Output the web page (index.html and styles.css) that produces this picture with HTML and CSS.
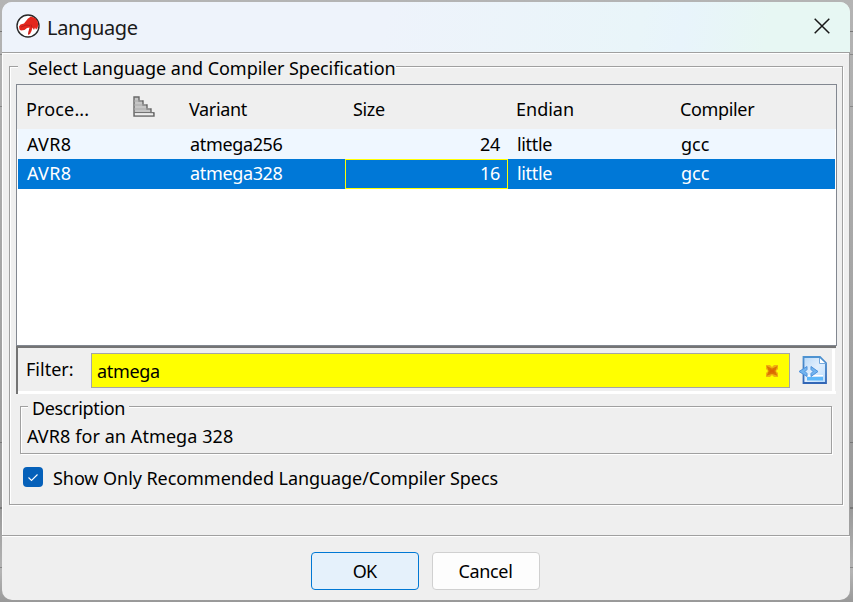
FILE: index.html
```html
<!DOCTYPE html>
<html lang="en">
<head>
<meta charset="utf-8">
<title>Language</title>
<link rel="stylesheet" href="styles.css">
</head>
<body>
<main class="dialog">
  <header class="titlebar">
    <svg class="logo" viewBox="0 0 24 24"><circle cx="12" cy="12" r="11" fill="#fff" stroke="#292929" stroke-width="1.4"/><path d="M3 12.500 4.500 10.500 8 9.500 10 7 12 4.500 15 2.500 19 4 21.500 7 22.300 11 21.500 14 20 15.500 19 13.500 18 16 16.500 13.500 15.500 17 14 20 12 21 12.500 17.500 13.500 13.500 11 14 8.500 16 5 16.500 3.500 15.500Z" fill="#e4261c"/><path d="m5 13 5-2 4 .5M15 10.500l1 3M14 15l-1.500 5" fill="none" stroke="#a81a18" stroke-width=".7"/></svg>
    <h1 class="title">Language</h1>
    <svg class="close" viewBox="0 0 16 16"><path d="m.7.7 14.6 14.6M15.3.7.7 15.3" fill="none" stroke="#181818" stroke-width="1.5"/></svg>
  </header>
  <section class="content">
    <div class="group">
      <div class="legend">Select Language and Compiler Specification</div>
      <div class="table">
        <div class="row head">
          <div class="cell first"><span class="proc">Proce...</span>
            <svg class="sort" viewBox="0 0 22 21"><path d="M1 1h5v4h4v4h4v4h4v4h3v3H1Z" fill="#c6c6c6" stroke="#686868" stroke-width="1.4"/><path d="M1 5h8M1 9h12M1 13h16" stroke="#aaa"/><path d="M1 16.500h20" stroke="#747474"/><path d="M2 18.300h18" stroke="#eee" stroke-width="2"/></svg>
          </div>
          <div class="cell">Variant</div><div class="cell">Size</div><div class="cell endian">Endian</div><div class="cell">Compiler</div>
        </div>
        <div class="row alt"><div class="cell avr">AVR8</div><div class="cell">atmega256</div><div class="cell num">24</div><div class="cell">little</div><div class="cell gcc">gcc</div></div>
        <div class="row selected"><div class="cell avr">AVR8</div><div class="cell">atmega328</div><div class="cell num focus">16</div><div class="cell">little</div><div class="cell gcc">gcc</div></div>
      </div>
      <div class="filter">
        <span class="filter-label">Filter:</span>
        <div class="field"><span>atmega</span>
          <svg class="clear" viewBox="0 0 14 14"><path d="M1 1h4l2 2 2-2h4v4l-2 2 2 2v4H9l-2-2-2 2H1V9l2-2-2-2Z" fill="#f0b010"/><path d="M3 3.500 7 5.500l4-2L9.500 7l1.500 3.500L7 9l-4 1.500L4.500 7Z" fill="#dc6500" stroke="#dc7600" stroke-width="1.500"/></svg>
        </div>
        <div class="options">
          <svg viewBox="0 0 30 30"><defs><linearGradient id="paper" x2="1" y2="1"><stop stop-color="#b9d9f8"/><stop offset=".5" stop-color="#e2effd"/><stop offset="1" stop-color="#b5dcff"/></linearGradient><linearGradient id="edge" x2="0" y2="1"><stop stop-color="#4e93d1"/><stop offset="1" stop-color="#3266b5"/></linearGradient></defs><path d="M5.500 2H22l6 6v20H5.500Z" fill="url(#paper)" stroke="url(#edge)" stroke-width="1.800"/><path d="M21.500 3v5.500h6" fill="#fff" stroke="#73a9df"/><path d="M9 22h16v3.500H9z" fill="#5eb8fa"/><path d="M10 20.500h15" stroke="#fff"/><path d="M9 11.500 1 16.500l8 5v-3l-2-2 2-2ZM13 11.500l7 5-7 5v-3l2-2-2-2Z" fill="#72b4ef" stroke="#4c91dc" stroke-width="1"/></svg>
        </div>
      </div>
      <div class="description">
        <div class="legend small">Description</div>
        <div class="desc-text">AVR8 for an Atmega 328</div>
      </div>
      <label class="check"><span class="box"><svg viewBox="0 0 20 20"><path d="m5.500 10.500 3 3 6-6" fill="none" stroke="#fff" stroke-width="1.100"/></svg></span><span class="check-text">Show Only Recommended Language/Compiler Specs</span></label>
    </div>
  </section>
  <footer class="buttons"><button class="btn ok">OK</button><button class="btn">Cancel</button></footer>
</main>
</body>
</html>
```
FILE: styles.css
```css
* { box-sizing: border-box; }
body {
  margin: 0;
  width: 853px;
  height: 602px;
  padding: 2px 3px 2px 2px;
  overflow: hidden;
  background:
    linear-gradient(#777, #777) 0 31px / 100% 1px no-repeat,
    linear-gradient(#888, #888) 0 54px / 100% 1px no-repeat,
    linear-gradient(#888, #888) 0 106px / 100% 1px no-repeat,
    linear-gradient(#777, #777) 0 442px / 100% 1px no-repeat,
    linear-gradient(#777, #777) 0 507px / 100% 2px no-repeat,
    linear-gradient(#888, #888) 0 567px / 100% 1px no-repeat,
    linear-gradient(#b4b4b4, #a5a5a5 50%, #999 84%, #b4b4b4 95%, #999);
  font: 18px/22px "Noto Sans", sans-serif;
  letter-spacing: -0.35px;
  color: #000;
}
svg { display: block; }
.dialog {
  height: 598px;
  display: flex;
  flex-direction: column;
  border-radius: 10px;
  overflow: hidden;
  background: #efefef;
}
.titlebar {
  height: 50px;
  flex: none;
  display: flex;
  align-items: center;
  padding: 0 20px 0 14px;
  background: linear-gradient(100deg, #eef3fb 0%, #eef3fb 45%, #e9f5f9 75%, #e8f4fb 80%, #e7f7f3 90%);
}
.logo { width: 24px; height: 24px; margin-top: -2px; }
.title { flex: 1; margin: 1px 0 0 7px; font-size: 20px; line-height: 26px; font-weight: 400; color: #1a1a1a; }
.close { width: 16px; height: 16px; margin-top: -2px; }
.content {
  height: 484px;
  flex: none;
  padding: 13px 6px 0 7px;
  border: solid #a0a0a0;
  border-width: 1px 1px 1px 0;
  box-shadow: inset 1px 1px #fff, 0 1px #fff;
}
.group {
  height: 439px;
  border: 1px solid #a0a0a0;
  box-shadow: inset 1px 1px #fff, 1px 1px #fff;
  padding: 0 5px 0 6px;
}
.legend {
  width: 378px;
  height: 22px;
  margin: -10px 0 0 2px;
  padding-left: 10px;
  background: #efefef;
  white-space: nowrap;
  letter-spacing: -0.04px;
}
.table {
  height: 262px;
  margin-top: 5px;
  border: 1px solid #828790;
  background: #fff;
  padding-right: 1px;
}
.row {
  display: grid;
  grid-template-columns: 163px 164px 163px 164px 1fr;
  height: 30px;
  margin-left: 1px;
  padding-bottom: 1px;
}
.head { height: 44px; margin: 0 -1px 0 0; padding-left: 1px; background: #efefef; }
.alt { background: #eff7ff; }
.selected { background: #0078d7; color: #fff; padding-bottom: 0; }
.cell { display: flex; align-items: center; padding: 0 8px 0 9px; }
.selected .cell { padding-bottom: 2px; }
.head .cell { padding: 4px 8px 0 8px; }
.head .endian { letter-spacing: 0; }
.proc { letter-spacing: 0.15px; }
.avr { letter-spacing: 0.3px; }
.gcc { letter-spacing: 0; }
.first { justify-content: space-between; }
.sort { width: 22px; height: 21px; margin: -5px 18px 0 0; }
.num { justify-content: flex-end; }
.selected .focus { border: 1px solid #ff0; padding: 0 7px 2px 0; }
.filter {
  height: 48px;
  margin-right: 1px;
  display: flex;
  align-items: center;
  border: solid #747474;
  border-width: 2px 0 0 2px;
  box-shadow: inset 0 -3px #fff;
  padding-left: 8px;
}
.filter-label { width: 65px; margin-top: -5px; letter-spacing: 0; }
.field {
  width: 699px;
  height: 35px;
  display: flex;
  align-items: center;
  justify-content: space-between;
  margin-top: -1px;
  padding: 1px 10px 0 5px;
  border: 1px solid #a5a5a5;
  background: #ff0;
}
.clear { width: 14px; height: 14px; }
.options { width: 45px; height: 43px; margin: -2px 0 0 0; padding: 6px 0 0 8px; border-right: 3px solid #fff; }
.options svg { width: 30px; height: 30px; }
.description {
  height: 48px;
  margin: 12px 5px 0 4px;
  border: 1px solid #a0a0a0;
  box-shadow: inset 1px 1px #fff, 1px 1px #fff;
}
.small { width: 101px; height: 20px; margin: -10px 0 0 7px; padding-left: 4px; letter-spacing: -0.35px; }
.desc-text { padding: 8px 0 0 6px; letter-spacing: 0.08px; }
.check { display: flex; align-items: center; margin: 13px 0 0 7px; gap: 10px; white-space: nowrap; height: 22px; }
.check-text { letter-spacing: -0.06px; }
.box { width: 20px; height: 20px; margin-top: -2px; border-radius: 4px; background: #0560b9; }
.buttons { display: flex; justify-content: center; gap: 13px; padding: 16px 2px 0 0; }
.btn {
  width: 108px;
  height: 38px;
  padding: 0;
  border: 1px solid #d0d0d0;
  border-radius: 4px;
  background: #fdfdfd;
  font: inherit;
  letter-spacing: inherit;
  color: #000;
}
.ok { border-color: #0078d4; background: #e5f1fb; letter-spacing: -0.8px; }
```
